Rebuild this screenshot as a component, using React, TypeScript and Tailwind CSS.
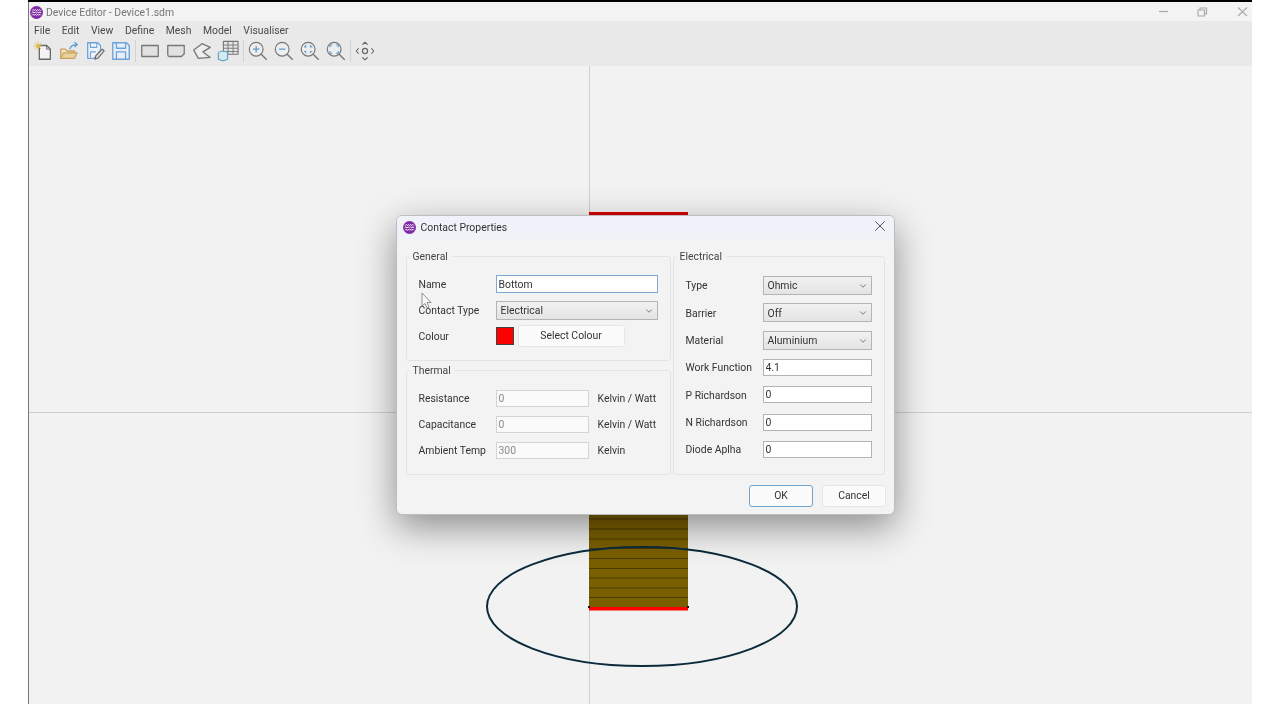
import { type ReactNode } from "react";
import { ChevronDown, X } from "lucide-react";

const MENU = ["File", "Edit", "View", "Define", "Mesh", "Model", "Visualiser"];
const HATCH_LINES = [519, 529, 539, 548.5, 558.5, 568.5, 578, 588, 597.5];

function Logo({ size }: { size: number }) {
    return (
        <svg width={size} height={size} viewBox="0 0 12 12" className="shrink-0">
            <circle cx="6" cy="6" r="6" fill="#7d2aa3" />
            <path d="M2 4.2 l1 -1 l1 1 l1 -1 l1 1 l1 -1 l1 1 l1 -1 l1 1" fill="none" stroke="#fff" strokeWidth="0.9" />
            <path d="M1.5 6.4 l1.1 -1 l1.1 1 l1.1 -1 l1.1 1 l1.1 -1 l1.1 1 l1.1 -1 l1.1 1" fill="none" stroke="#fff" strokeWidth="0.9" />
            <path d="M2 8.6 l1 -1 l1 1 l1 -1 l1 1 l1 -1 l1 1 l1 -1 l1 1" fill="none" stroke="#fff" strokeWidth="0.9" />
        </svg>
    );
}

function ToolIcon({ children }: { children: ReactNode }) {
    return (
        <div className="w-[26px] h-[24px] flex items-center justify-center shrink-0">
            <svg width="22" height="22" viewBox="0 0 24 24" fill="none" strokeLinejoin="round">
                {children}
            </svg>
        </div>
    );
}

function ToolSep() {
    return <div className="w-px h-[22px] bg-[#d2d2d2] mx-[1px] shrink-0" />;
}

function Magnifier({ children }: { children?: ReactNode }) {
    return (
        <ToolIcon>
            <circle cx="10" cy="10" r="7.5" stroke="#777" strokeWidth="1.3" fill="#eeeeee" />
            <path d="M15.5 15.5 L21.5 21.5" stroke="#777" strokeWidth="1.5" />
            {children}
        </ToolIcon>
    );
}

function Toolbar() {
    return (
        <div className="h-[27px] flex items-center pl-[1px] pb-[3px] bg-[#e9e9e9]">
            <ToolIcon>
                <path d="M8 6 H16 L20 10 V21 H8 Z" fill="#f4f4f4" stroke="#666" strokeWidth="1.4" />
                <path d="M16 6 V10 H20" stroke="#666" strokeWidth="1" />
                <circle cx="6.5" cy="6.5" r="2.2" fill="#e8c35f" />
                <path d="M6.5 1.5 V11.5 M1.5 6.5 H11.5 M3 3 L10 10 M10 3 L3 10" stroke="#e0b84c" strokeWidth="0.8" />
            </ToolIcon>
            <ToolIcon>
                <path d="M3 20 V10 H8 L10 12 H18 V20 Z" fill="#f3e6c4" stroke="#c7a35c" strokeWidth="1.4" />
                <path d="M3 20 L6 14 H21 L18 20 Z" fill="#e9d29c" stroke="#c7a35c" strokeWidth="1.2" />
                <path d="M13 10 C14 6 16 5 20 5 M18 2.5 L21 5 L18 7.5" stroke="#5b9bd5" strokeWidth="1.5" />
            </ToolIcon>
            <ToolIcon>
                <path d="M4 3 H15 L18 6 V11 L11 20 H4 Z" fill="#edf3fa" stroke="#6fa3d8" strokeWidth="1.4" />
                <path d="M7 3 V8 H14 V3 M7 19 V13 H13" stroke="#6fa3d8" strokeWidth="1.2" />
                <path d="M12 21 L13 17 L20 10 L22 12 L15 20 Z" fill="#dcdcdc" stroke="#666" strokeWidth="1.2" />
            </ToolIcon>
            <ToolIcon>
                <path d="M3 3 H18 L21 6 V21 H3 Z" fill="#e6eff8" stroke="#6fa3d8" strokeWidth="1.5" />
                <path d="M7 3 V9 H17 V3 M7 21 V13 H17 V21" stroke="#6fa3d8" strokeWidth="1.4" />
            </ToolIcon>
            <ToolSep />
            <ToolIcon>
                <rect x="3" y="6" width="18" height="12" fill="#e1e1e1" stroke="#777" strokeWidth="1.4" />
            </ToolIcon>
            <ToolIcon>
                <path d="M3 6 H21 V15 L18 18 H5 Q3 18 3 16 Z" fill="#e1e1e1" stroke="#777" strokeWidth="1.4" />
            </ToolIcon>
            <ToolIcon>
                <path d="M3 11 L12 4 L21 8 L13 13 L21 19 L8 20 Z" fill="#eeeeee" stroke="#777" strokeWidth="1.4" />
            </ToolIcon>
            <ToolIcon>
                <rect x="7" y="1.5" width="16" height="14" fill="#e6e6e6" stroke="#777" strokeWidth="1.2" />
                <path d="M7 5.5 H23 M7 9 H23 M7 12.5 H23 M12 1.5 V15.5 M17.5 1.5 V15.5" stroke="#777" strokeWidth="1" />
                <ellipse cx="6.5" cy="14.5" rx="5" ry="2.2" fill="#d5e9f2" stroke="#5ea6c4" strokeWidth="1.3" />
                <path d="M1.5 14.5 V21 Q6.5 24 11.5 21 V14.5" fill="#d5e9f2" stroke="#5ea6c4" strokeWidth="1.3" />
            </ToolIcon>
            <div className="w-px shrink-0" />
            <ToolSep />
            <Magnifier>
                <path d="M6.5 10 H13.5 M10 6.5 V13.5" stroke="#5b9bd5" strokeWidth="1.4" />
            </Magnifier>
            <Magnifier>
                <path d="M6.5 10 H13.5" stroke="#5b9bd5" strokeWidth="1.4" />
            </Magnifier>
            <Magnifier>
                <path d="M5.5 7.5 L7.5 7.5 L7.5 5.5 M12.5 5.5 L12.5 7.5 L14.5 7.5 M5.5 12.5 L7.5 12.5 L7.5 14.5 M12.5 14.5 L12.5 12.5 L14.5 12.5" stroke="#5b9bd5" strokeWidth="1.1" />
            </Magnifier>
            <Magnifier>
                <path d="M5.5 8 V5.5 H8 M12 5.5 H14.5 V8 M5.5 12 V14.5 H8 M12 14.5 H14.5 V12" stroke="#5b9bd5" strokeWidth="1.2" />
            </Magnifier>
            <ToolSep />
            <ToolIcon>
                <circle cx="12" cy="12" r="2.8" stroke="#666" strokeWidth="1.3" />
                <path d="M9 5 L12 2.5 L15 5 M9 19 L12 21.5 L15 19 M5 9 L2.5 12 L5 15 M19 9 L21.5 12 L19 15" stroke="#666" strokeWidth="1.2" />
            </ToolIcon>
        </div>
    );
}

function Canvas() {
    return (
        <div className="relative flex-1 bg-[#f2f2f2]">
            <svg width="1223" height="638" viewBox="29 66 1223 638" className="absolute inset-0">
                <path d="M589.5 66 V704" stroke="#cfcfcf" />
                <path d="M29 412.5 H1252" stroke="#cfcfcf" />
                <rect x="589" y="212" width="99" height="3" fill="#d80000" />
                <rect x="589" y="500" width="99" height="107" fill="#7a5f00" />
                {HATCH_LINES.map((y) => (
                    <path key={y} d={`M589 ${y} H688`} stroke="#3f3300" strokeOpacity="0.8" />
                ))}
                <rect x="589" y="607" width="99" height="3.5" fill="#ff0000" />
                <ellipse cx="642" cy="606.5" rx="155" ry="59.5" fill="none" stroke="#0b2b3c" strokeWidth="2" />
                <rect x="588" y="606" width="2" height="2" fill="#111" />
                <rect x="687" y="606" width="2" height="2" fill="#111" />
            </svg>
        </div>
    );
}

function Group({ title, className, children }: { title: string; className: string; children: ReactNode }) {
    return (
        <div className={`relative border border-[#e2e5e8] rounded-[3px] ${className}`}>
            <span className="absolute left-[2px] -top-[7px] bg-[#f3f3f3] px-[4px] leading-[14px] text-[#444]">{title}</span>
            {children}
        </div>
    );
}

function Combo({ value, className }: { value: string; className: string }) {
    return (
        <div className={`h-[19px] flex items-center justify-between pl-[4px] pr-[3px] pt-[1px] bg-gradient-to-b from-[#f1f1f1] to-[#e4e4e4] border border-[#b4b4b4] text-[#333] ${className}`}>
            {value}
            <ChevronDown size={10} strokeWidth={1.6} color="#444" />
        </div>
    );
}

function Field({ value, disabled, className }: { value: string; disabled?: boolean; className: string }) {
    return (
        <input
            readOnly
            value={value}
            className={`h-[17px] px-[2px] border outline-none ${disabled ? "bg-[#fafafa] border-[#d4d4d4] text-[#8a8a8a]" : "bg-white border-[#b4b4b4] text-[#333]"} ${className}`}
        />
    );
}

function Row({ label, children }: { label: string; children: ReactNode }) {
    return (
        <div className="h-[26px] flex items-center">
            <span className="w-[77px] pt-[1px] shrink-0 text-[#333]">{label}</span>
            {children}
        </div>
    );
}

function ElectricalRow({ label, children }: { label: string; children: ReactNode }) {
    return (
        <div className="h-[27.3px] flex items-center">
            <span className="w-[77px] pt-[1px] shrink-0 text-[#333]">{label}</span>
            {children}
        </div>
    );
}

function ThermalRow({ label, value, unit }: { label: string; value: string; unit: string }) {
    return (
        <Row label={label}>
            <Field value={value} disabled className="w-[93px]" />
            <span className="ml-[8px] pl-[1px] pt-[1px] text-[#333]">{unit}</span>
        </Row>
    );
}

function ContactDialog() {
    return (
        <div className="absolute left-[396px] top-[214.5px] w-[499px] h-[300.5px] flex flex-col border border-[#bdbdbd] rounded-[6px] bg-[#f3f3f3] shadow-[0_12px_36px_rgba(0,0,0,0.42)] overflow-hidden">
            <div className="h-[23.5px] flex items-center pl-[5.5px] pr-[5px] bg-[#eff3f9]">
                <Logo size={13} />
                <span className="ml-[5px] pt-[1px] text-[#333]">Contact Properties</span>
                <X size={18} strokeWidth={1.1} color="#333" className="ml-auto mb-[2px]" />
            </div>

            <div className="flex gap-[2px] pl-[8.5px] pt-[17px]">
                <div className="w-[265px] flex flex-col gap-[9px]">
                    <Group title="General" className="h-[105px] pt-[14px] pl-[12px]">
                        <Row label="Name">
                            <input readOnly value="Bottom" className="w-[162px] h-[18px] px-[2px] bg-white border border-[#7fa9cf] text-[#333] outline-none" />
                        </Row>
                        <Row label="Contact Type">
                            <Combo value="Electrical" className="w-[162px]" />
                        </Row>
                        <Row label="Colour">
                            <div className="w-[18px] h-[18px] bg-[#ff0000] border border-[#444]" />
                            <button className="ml-[4px] w-[107px] h-[22px] bg-[#fbfbfb] border border-[#e6e6e6] rounded-[3px] text-[#333]">Select Colour</button>
                        </Row>
                    </Group>
                    <Group title="Thermal" className="h-[105px] pt-[14px] pl-[12px]">
                        <ThermalRow label="Resistance" value="0" unit="Kelvin / Watt" />
                        <ThermalRow label="Capacitance" value="0" unit="Kelvin / Watt" />
                        <ThermalRow label="Ambient Temp" value="300" unit="Kelvin" />
                    </Group>
                </div>

                <Group title="Electrical" className="w-[212px] h-[219px] pt-[15px] pl-[12px]">
                    <ElectricalRow label="Type"><Combo value="Ohmic" className="w-[109px]" /></ElectricalRow>
                    <ElectricalRow label="Barrier"><Combo value="Off" className="w-[109px]" /></ElectricalRow>
                    <ElectricalRow label="Material"><Combo value="Aluminium" className="w-[109px]" /></ElectricalRow>
                    <ElectricalRow label="Work Function"><Field value="4.1" className="w-[109px]" /></ElectricalRow>
                    <ElectricalRow label="P Richardson"><Field value="0" className="w-[109px]" /></ElectricalRow>
                    <ElectricalRow label="N Richardson"><Field value="0" className="w-[109px]" /></ElectricalRow>
                    <ElectricalRow label="Diode Aplha"><Field value="0" className="w-[109px]" /></ElectricalRow>
                </Group>
            </div>

            <div className="flex justify-end gap-[9px] pr-[8px] mt-[10px]">
                <button className="w-[64px] h-[22px] bg-[#fbfbfb] border border-[#6ea3cf] rounded-[3px] text-[#333]">OK</button>
                <button className="w-[64px] h-[22px] bg-[#fbfbfb] border border-[#e6e6e6] rounded-[3px] text-[#333]">Cancel</button>
            </div>
        </div>
    );
}

function Cursor() {
    return (
        <svg width="13" height="18" viewBox="0 0 13 18" className="absolute left-[421px] top-[292px]">
            <path d="M1 1 V14 L4 11.5 L6 16 L8 15 L6 10.5 H10 Z" fill="#f8f8f8" stroke="#777" strokeWidth="0.8" />
        </svg>
    );
}

export default function App() {
    return (
        <div className="relative w-[1280px] h-[720px] bg-white overflow-hidden blur-[0.35px] [font-family:Roboto,sans-serif] text-[10.4px]">
            <div className="ml-[28px] w-[1224px] h-[704px] flex flex-col border-l border-[#777]">
                <div className="h-[2px] -ml-px bg-black" />
                <div className="h-[19px] flex items-center pl-[1px] pt-[2px] bg-[#f3f3f3]">
                    <Logo size={13} />
                    <span className="ml-[3px] text-[#767676]">Device Editor - Device1.sdm</span>
                    <svg width="100" height="12" viewBox="0 0 100 12" fill="none" stroke="#a8a8a8" className="ml-auto mr-[4px]">
                        <path d="M11 4.5 H20" strokeWidth="1.2" />
                        <path d="M50 3 H56.5 V9 H50 Z M52 3 V1 H58.5 V7 H57" strokeWidth="1.1" />
                        <path d="M90 0.5 L99 9 M99 0.5 L90 9" strokeWidth="1.1" />
                    </svg>
                </div>
                <div className="h-[18px] flex items-center gap-[11.5px] pl-[5px] pt-[2px] bg-[#e9e9e9] text-[#4a4a4a]">
                    {MENU.map((item) => (
                        <span key={item}>{item}</span>
                    ))}
                </div>
                <Toolbar />
                <Canvas />
            </div>
            <ContactDialog />
            <Cursor />
        </div>
    );
}
